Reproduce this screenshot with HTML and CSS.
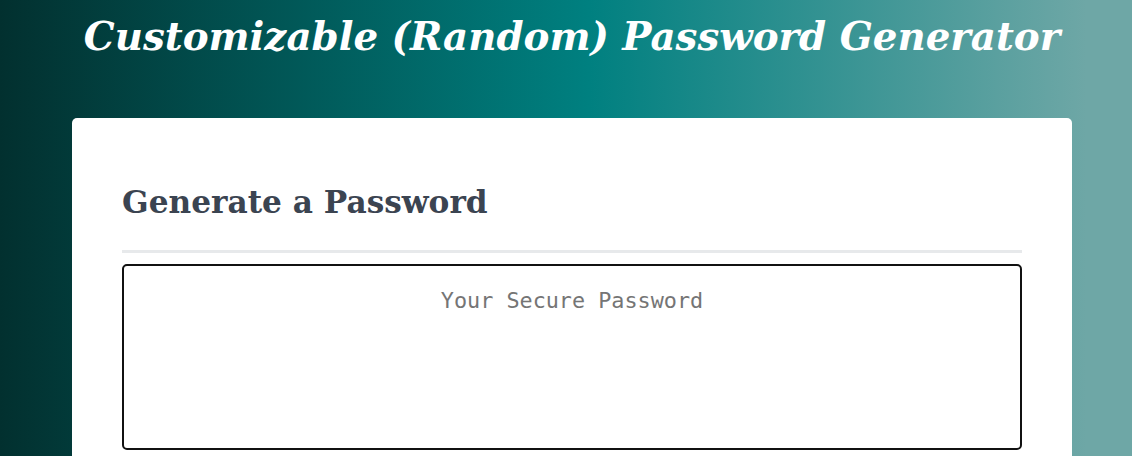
FILE: index.html
```html
<!DOCTYPE html>
<html lang="en">
<head>
<meta charset="UTF-8">
<title>Password Generator</title>
<link rel="stylesheet" href="styles.css">
</head>
<body>
<div class="wrapper">
  <header>
    <h1 class="title">Customizable (Random) Password Generator</h1>
  </header>
  <div class="card">
    <div class="card-header">
      <h2 class="card-title">Generate a Password</h2>
    </div>
    <div class="card-body">
      <textarea readonly class="password" placeholder="Your Secure Password" aria-label="Generated Password"></textarea>
    </div>
  </div>
</div>
</body>
</html>
```

FILE: styles.css
```css
html, body {
  margin: 0;
  padding: 0;
  height: 100%;
}

body {
  font-family: "DejaVu Serif", Georgia, serif;
  background: linear-gradient(90deg, #02302f 0%, #008080 52%, #6ea7a6 96%, #6ea7a6 100%);
  overflow: hidden;
}

.wrapper {
  padding: 0 20px 0 32px;
}

header {
  text-align: center;
}

.title {
  margin: 0;
  padding-top: 12px;
  font-size: 38.8px;
  font-style: italic;
  font-weight: bold;
  color: #ffffff;
  line-height: 50px;
}

.card {
  box-sizing: border-box;
  background: #ffffff;
  border-radius: 5px;
  max-width: 1000px;
  margin: 56px auto 0;
  padding: 60px 50px 30px;
  color: #3b4451;
}

.card-header::after {
  content: "";
  display: block;
  height: 3px;
  background: #e7e9eb;
}

.card-title {
  margin: 0 0 24px;
  font-size: 31.2px;
  font-weight: bold;
  line-height: 48px;
}

.card-body {
  padding-top: 11px;
}

.password {
  box-sizing: border-box;
  display: block;
  width: 100%;
  height: 186px;
  margin: 0;
  padding: 22px 15px 15px;
  border: 2px solid #111111;
  border-radius: 5px;
  font-family: "DejaVu Sans Mono", monospace;
  font-size: 21.8px;
  text-align: center;
  resize: none;
  overflow: hidden;
  background: #ffffff;
}

.password::placeholder {
  color: #757575;
}
```
